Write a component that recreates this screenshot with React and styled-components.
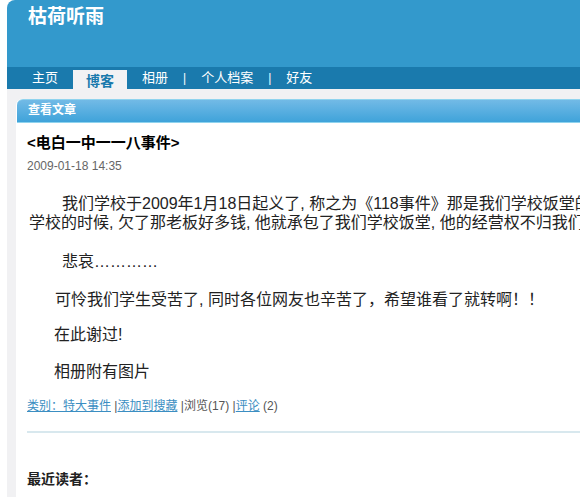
import React from "react";
import styled, { createGlobalStyle } from "styled-components";

const Global = createGlobalStyle`
  html, body { margin: 0; padding: 0; background: #fff; overflow: hidden; }
  body { font-family: "Liberation Sans", "Noto Sans CJK SC", sans-serif; }
`;

const Page = styled.div`
  margin-left: 7px;
  width: 900px;
`;

const Header = styled.div`
  height: 67px;
  background: #3399cc;
  border-top-left-radius: 8px;
  padding: 6px 0 0 21px;
  box-sizing: border-box;
`;

const SiteTitle = styled.h1`
  margin: 0;
  font-size: 19px;
  line-height: 22px;
  font-weight: bold;
  color: #fff;
`;

const Nav = styled.div`
  height: 22px;
  background: #1a7aad;
  display: flex;
  align-items: center;
  gap: 15px;
  padding-left: 25px;
`;

const NavItem = styled.span`
  font-size: 13px;
  color: #fff;
  line-height: 22px;
`;

const ActiveTab = styled.span`
  align-self: flex-end;
  height: 19px;
  padding: 0 13px;
  background: #f2f2f4;
  color: #1a7aad;
  font-size: 14px;
  font-weight: bold;
  line-height: 23px;
`;

const Sep = styled.span`
  font-size: 12px;
  color: #fff;
`;

const Main = styled.div`
  background: #f1f1f3;
  padding: 10px 0 0 9px;
`;

const Panel = styled.div`
  background: #fff;
  border-top-left-radius: 6px;
`;

const PanelHead = styled.div`
  height: 24px;
  box-sizing: border-box;
  margin-left: 1px;
  background: linear-gradient(#72bae6, #3fa3da);
  border-top: 1px solid #8fd3ee;
  border-bottom: 1px solid #8fd3ee;
  border-top-left-radius: 6px;
  padding-left: 11px;
  color: #fff;
  font-size: 12px;
  font-weight: bold;
  line-height: 21px;
`;

const Article = styled.div`
  padding: 10px 11px 14px;
`;

const Title = styled.div`
  font-size: 15px;
  font-weight: bold;
  color: #000;
  line-height: 20px;
`;

const Date = styled.div`
  margin-top: 5px;
  font-size: 12px;
  color: #666;
  line-height: 16px;
`;

const Body = styled.div`
  margin-top: 20px;
  padding-left: 2px;
  color: #222;
  font-size: 16px;
  line-height: 19px;
  white-space: nowrap;
`;

const Para = styled.p`
  margin: 0 0 ${(p) => p.$gap}px;
  text-indent: ${(p) => p.$indent}px;
`;

const Meta = styled.div`
  margin-top: 17px;
  font-size: 12px;
  line-height: 16px;
  color: #555;
`;

const Link = styled.a`
  color: #3b8ec2;
  text-decoration: underline;
`;

const Rule = styled.div`
  height: 2px;
  background: #d8e8ee;
  margin-top: 17px;
`;

const Readers = styled.div`
  margin-top: 35px;
  font-size: 14px;
  font-weight: bold;
  color: #222;
`;

export default function App() {
  return (
    <>
      <Global />
      <Page>
        <Header>
          <SiteTitle>枯荷听雨</SiteTitle>
        </Header>
        <Nav>
          <NavItem>主页</NavItem>
          <ActiveTab>博客</ActiveTab>
          <NavItem>相册</NavItem>
          <Sep>|</Sep>
          <NavItem>个人档案</NavItem>
          <Sep>|</Sep>
          <NavItem>好友</NavItem>
        </Nav>
        <Main>
          <Panel>
            <PanelHead>查看文章</PanelHead>
            <Article>
              <Title>&lt;电白一中一一八事件&gt;</Title>
              <Date>2009-01-18 14:35</Date>
              <Body>
                <Para $indent={33} $gap={20}>
                  我们学校于2009年1月18日起义了, 称之为《118事件》那是我们学校饭堂的
                  <br />
                  学校的时候, 欠了那老板好多钱, 他就承包了我们学校饭堂, 他的经营权不归我们
                </Para>
                <Para $indent={33} $gap={19}>悲哀…………</Para>
                <Para $indent={26} $gap={16}>可怜我们学生受苦了, 同时各位网友也辛苦了，希望谁看了就转啊！！</Para>
                <Para $indent={25} $gap={18}>在此谢过!</Para>
                <Para $indent={25} $gap={0}>相册附有图片</Para>
              </Body>
              <Meta>
                <Link>类别：特大事件</Link> |<Link>添加到搜藏</Link> |浏览(17) |<Link>评论</Link> (2)
              </Meta>
              <Rule />
              <Readers>最近读者：</Readers>
            </Article>
          </Panel>
        </Main>
      </Page>
    </>
  );
}
